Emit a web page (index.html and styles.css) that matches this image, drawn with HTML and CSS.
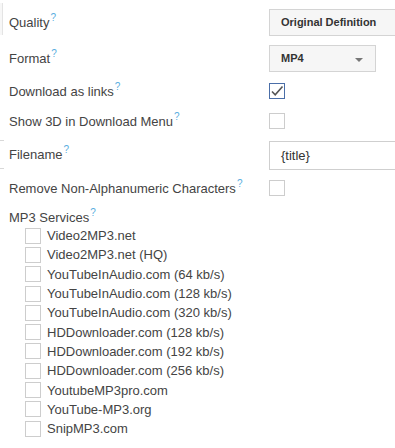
FILE: index.html
```html
<!DOCTYPE html>
<html lang="en">
<head>
    <meta charset="UTF-8">
    <meta name="viewport" content="width=device-width, initial-scale=1.0">
    <title>Settings</title>
    <link rel="stylesheet" href="styles.css">
</head>
<body>
    <div class="settings">
        <span class="edge edge-box"></span>
        <span class="edge edge-line top"></span>
        <span class="edge edge-line bottom"></span>

        <div class="row tall">
            <div class="label">Quality<sup class="help">?</sup></div>
            <div class="control">
                <div class="box wide">Original Definition</div>
            </div>
        </div>

        <div class="row tall">
            <div class="label">Format<sup class="help">?</sup></div>
            <div class="control">
                <div class="box select">MP4<span class="arrow"></span></div>
            </div>
        </div>

        <div class="row">
            <div class="label">Download as links<sup class="help">?</sup></div>
            <div class="control">
                <span class="check checked">
                    <svg width="14" height="14" viewBox="0 0 14 14"><path d="M2 7.5 L5.2 10.8 L12.5 2.5" fill="none" stroke="#555" stroke-width="1.6"/></svg>
                </span>
            </div>
        </div>

        <div class="row">
            <div class="label">Show 3D in Download Menu<sup class="help">?</sup></div>
            <div class="control"><span class="check"></span></div>
        </div>

        <div class="row tall">
            <div class="label">Filename<sup class="help">?</sup></div>
            <div class="control">
                <div class="input">{title}</div>
            </div>
        </div>

        <div class="row mid">
            <div class="label">Remove Non-Alphanumeric Characters<sup class="help">?</sup></div>
            <div class="control"><span class="check"></span></div>
        </div>

        <div class="group">
            <div class="label">MP3 Services<sup class="help">?</sup></div>
            <ul class="services">
                <li><span class="check"></span>Video2MP3.net</li>
                <li><span class="check"></span>Video2MP3.net (HQ)</li>
                <li><span class="check"></span>YouTubeInAudio.com (64 kb/s)</li>
                <li><span class="check"></span>YouTubeInAudio.com (128 kb/s)</li>
                <li><span class="check"></span>YouTubeInAudio.com (320 kb/s)</li>
                <li><span class="check"></span>HDDownloader.com (128 kb/s)</li>
                <li><span class="check"></span>HDDownloader.com (192 kb/s)</li>
                <li><span class="check"></span>HDDownloader.com (256 kb/s)</li>
                <li><span class="check"></span>YoutubeMP3pro.com</li>
                <li><span class="check"></span>YouTube-MP3.org</li>
                <li><span class="check"></span>SnipMP3.com</li>
            </ul>
        </div>
    </div>
</body>
</html>
```

FILE: styles.css
```css
:root {
    --text-color: #444;
    --help-color: #5aaee0;
    --border-color: #d4d4d4;
    --box-background: #f6f6f6;
}

body {
    font-family: "Liberation Sans", Arial, sans-serif;
    font-size: 13px;
    color: var(--text-color);
    background: #fff;
    margin: 0;
    overflow: hidden;
}

.settings {
    position: relative;
    padding-top: 4px;
}

/* clipped bits of the neighbouring panel on the left edge */
.edge {
    position: absolute;
    left: 0;
}

.edge-box {
    top: 3px;
    width: 2px;
    height: 32px;
    background: #f7f7f7;
    border-right: 1px solid #e4e4e4;
}

.edge-line {
    width: 4px;
    height: 1px;
    background: #d8d8d8;
}

.edge-line.top {
    top: 140px;
}

.edge-line.bottom {
    top: 168px;
}

.row {
    display: flex;
    align-items: center;
    height: 30px;
}

.row.tall {
    height: 36px;
}

.row.mid {
    height: 32px;
}

.label {
    flex: none;
    width: 260px;
    padding-left: 9px;
    white-space: nowrap;
}

.help {
    color: var(--help-color);
    font-size: 10px;
    margin-left: 1px;
    vertical-align: 6px;
    line-height: 0;
}

.control {
    flex: none;
    display: flex;
    align-items: center;
}

.box {
    box-sizing: border-box;
    height: 27px;
    display: flex;
    align-items: center;
    padding-left: 11px;
    background: var(--box-background);
    border: 1px solid var(--border-color);
    font-size: 11px;
    font-weight: bold;
    color: #333;
}

.box.wide {
    width: 140px;
}

.box.select {
    width: 107px;
    position: relative;
}

.arrow {
    position: absolute;
    right: 12px;
    top: 12px;
    border-left: 4px solid transparent;
    border-right: 4px solid transparent;
    border-top: 4px solid #777;
}

.input {
    box-sizing: border-box;
    width: 140px;
    height: 29px;
    margin-top: 2px;
    display: flex;
    align-items: center;
    padding-left: 11px;
    border: 1px solid #cfcfcf;
    background: #fff;
    color: #333;
}

.check {
    box-sizing: border-box;
    display: inline-flex;
    align-items: center;
    justify-content: center;
    width: 16px;
    height: 16px;
    border: 1px solid #cdcdcd;
    background: #fff;
}

.check.checked {
    border-color: #4a6ea8;
}

.group .label {
    line-height: 15px;
    margin-top: 6px;
}

.services {
    list-style: none;
    margin: 1px 0 0;
    padding: 0 0 0 25px;
}

.services li {
    display: flex;
    align-items: center;
    height: 19.3px;
    color: #444;
}

.services .check {
    margin-right: 6px;
}
```
